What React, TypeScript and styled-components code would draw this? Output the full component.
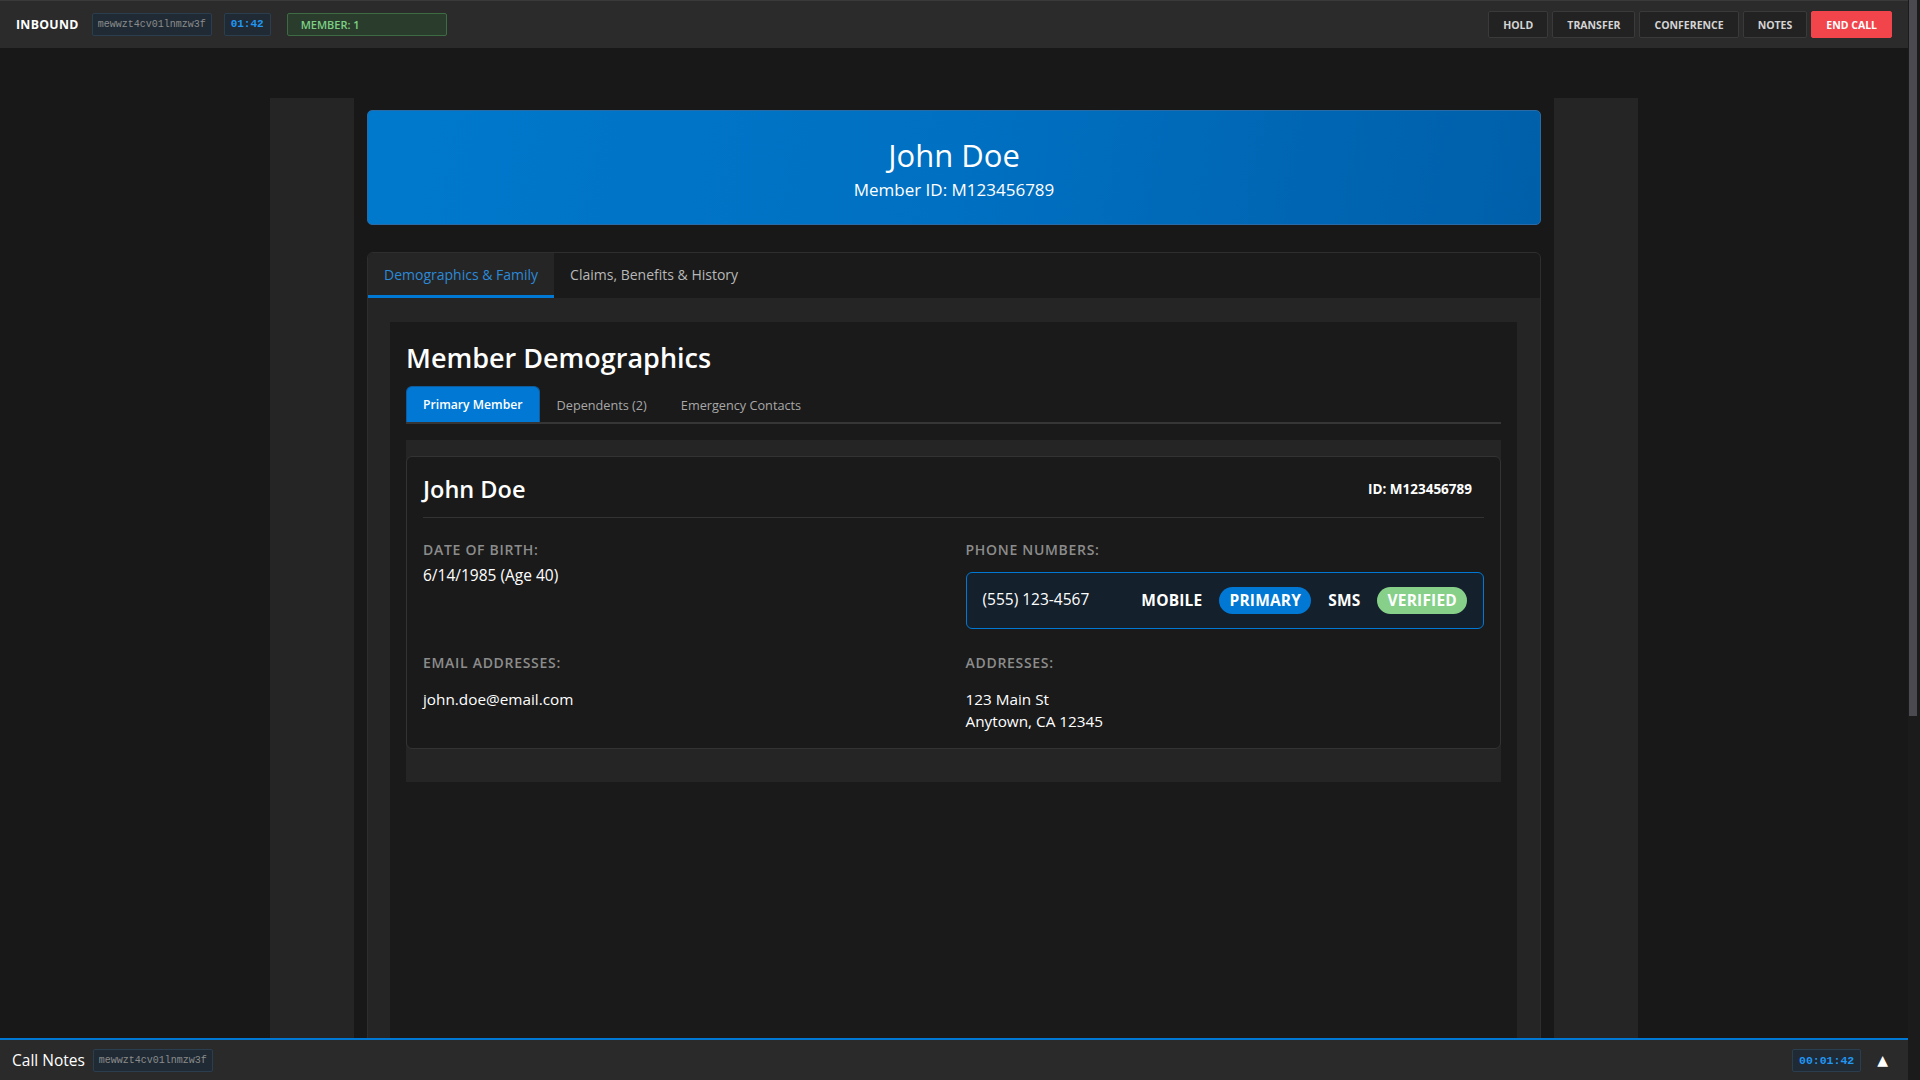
import React from 'react';
import styled, { createGlobalStyle } from 'styled-components';

const GlobalStyle = createGlobalStyle`
  * {
    box-sizing: border-box;
  }
  html,
  body {
    margin: 0;
    padding: 0;
    background: #181818;
    overflow: hidden;
  }
  body {
    font-family: 'Segoe UI', 'Open Sans', 'Noto Sans', sans-serif;
    color: #ffffff;
  }
`;

const sessionId = 'mewwzt4cv01lnmzw3f';
const topActions = ['Hold', 'Transfer', 'Conference', 'Notes'];
const phoneTags = [
  { label: 'Mobile', tone: 'plain' },
  { label: 'Primary', tone: 'blue' },
  { label: 'SMS', tone: 'plain' },
  { label: 'Verified', tone: 'green' },
];

type Tone = 'plain' | 'blue' | 'green';

const tagColors: Record<Tone, string> = {
  plain: 'transparent',
  blue: '#0078d4',
  green: '#86d08a',
};

const App = (): JSX.Element => {
  return (
    <Shell>
      <GlobalStyle />
      <Viewport>
        <TopBar>
          <TopLeft>
            <Direction>INBOUND</Direction>
            <SessionChip>{sessionId}</SessionChip>
            <TimerChip>01:42</TimerChip>
            <MemberChip>MEMBER: 1</MemberChip>
          </TopLeft>
          <TopRight>
            {topActions.map((label) => (
              <ActionButton key={label}>{label}</ActionButton>
            ))}
            <ActionButton danger>End Call</ActionButton>
          </TopRight>
        </TopBar>

        <Main>
          <Layout>
            <SideColumn />
            <Center>
              <MemberHeader>
                <HeaderName>John Doe</HeaderName>
                <HeaderId>Member ID: M123456789</HeaderId>
              </MemberHeader>

              <TabsCard>
                <TabBar>
                  <Tab active>Demographics &amp; Family</Tab>
                  <Tab>Claims, Benefits &amp; History</Tab>
                </TabBar>
                <TabContent>
                  <Panel>
                    <PanelTitle>Member Demographics</PanelTitle>
                    <SubTabBar>
                      <SubTab active>Primary Member</SubTab>
                      <SubTab>Dependents (2)</SubTab>
                      <SubTab>Emergency Contacts</SubTab>
                    </SubTabBar>

                    <CardWell>
                      <MemberCard>
                        <CardHeader>
                          <CardName>John Doe</CardName>
                          <CardId>ID: M123456789</CardId>
                        </CardHeader>
                        <FieldGrid>
                          <Field>
                            <FieldLabel>Date of Birth:</FieldLabel>
                            <FieldValue>6/14/1985 (Age 40)</FieldValue>
                          </Field>
                          <Field>
                            <FieldLabel>Phone Numbers:</FieldLabel>
                            <FieldList offset={14}>
                              <PhoneRow>
                                <PhoneNumber>(555) 123-4567</PhoneNumber>
                                <TagGroup>
                                  {phoneTags.map((tag) => (
                                    <Tag key={tag.label} tone={tag.tone as Tone}>
                                      {tag.label}
                                    </Tag>
                                  ))}
                                </TagGroup>
                              </PhoneRow>
                            </FieldList>
                          </Field>
                          <Field>
                            <FieldLabel>Email Addresses:</FieldLabel>
                            <FieldList offset={17}>
                              <ListLine>john.doe@email.com</ListLine>
                            </FieldList>
                          </Field>
                          <Field>
                            <FieldLabel>Addresses:</FieldLabel>
                            <FieldList offset={17}>
                              <ListLine>123 Main St</ListLine>
                              <ListLine>Anytown, CA 12345</ListLine>
                            </FieldList>
                          </Field>
                        </FieldGrid>
                      </MemberCard>
                    </CardWell>
                  </Panel>
                </TabContent>
              </TabsCard>
            </Center>
            <SideColumn />
          </Layout>
        </Main>

        <BottomBar>
          <BottomLeft>
            <NotesTitle>Call Notes</NotesTitle>
            <SessionChip>{sessionId}</SessionChip>
          </BottomLeft>
          <BottomRight>
            <TimerChip wide>00:01:42</TimerChip>
            <ExpandButton>▲</ExpandButton>
          </BottomRight>
        </BottomBar>
      </Viewport>
      <ScrollTrack>
        <ScrollThumb />
      </ScrollTrack>
    </Shell>
  );
};

const Shell = styled.div`
  height: 100vh;
  display: flex;
  background: #181818;
`;
const Viewport = styled.div`
  flex: 1;
  min-width: 0;
  overflow-y: auto;
  scrollbar-width: none;
  &::-webkit-scrollbar {
    display: none;
  }
`;
const ScrollTrack = styled.div`
  width: 12px;
  flex-shrink: 0;
  padding: 0 3px 0 1px;
  background: #1b1b1b;
`;
const ScrollThumb = styled.div`
  height: 716px;
  background: #4a4a50;
`;

const TopBar = styled.header`
  position: sticky;
  top: 0;
  z-index: 10;
  height: 48px;
  display: flex;
  align-items: center;
  justify-content: space-between;
  padding: 0 16px;
  background: #2b2b2b;
  border-top: 1px solid #3a3a3a;
`;
const TopLeft = styled.div`
  display: flex;
  align-items: center;
  gap: 12px;
`;
const Direction = styled.span`
  font-size: 12.3px;
  font-weight: 700;
  letter-spacing: 0.3px;
  color: #ffffff;
  margin-right: 1px;
`;
const SessionChip = styled.span`
  font-family: 'Liberation Mono', 'DejaVu Sans Mono', monospace;
  font-size: 10px;
  line-height: 13px;
  padding: 4px 5px;
  color: #8c8c8c;
  background: #1f2a34;
  border: 1px solid #2b3e50;
  border-radius: 2px;
`;
const TimerChip = styled.span<{ wide?: boolean }>`
  font-family: 'Liberation Mono', 'DejaVu Sans Mono', monospace;
  font-size: ${({ wide }): string => (wide ? '11.5px' : '11px')};
  font-weight: 700;
  line-height: 13px;
  padding: 4px 6px;
  color: #2196f3;
  background: #1f2a34;
  border: 1px solid #2b3e50;
  border-radius: 2px;
`;
const MemberChip = styled.span`
  width: 160px;
  margin-left: 4px;
  font-size: 11px;
  font-weight: 600;
  line-height: 13px;
  padding: 4px 13px;
  color: #7ccf86;
  background: #2a3d2c;
  border: 1px solid #3d6b42;
  border-radius: 2px;
`;
const TopRight = styled.div`
  display: flex;
  align-items: center;
  gap: 4px;
`;
const ActionButton = styled.button<{ danger?: boolean }>`
  height: 27px;
  padding: 0 14px;
  font-family: inherit;
  font-size: 10.5px;
  font-weight: 700;
  text-transform: uppercase;
  color: ${({ danger }): string => (danger ? '#ffffff' : '#d4d4d4')};
  background: ${({ danger }): string => (danger ? '#f1454b' : '#222222')};
  border: 1px solid ${({ danger }): string => (danger ? '#f1454b' : '#3a3a3a')};
  border-radius: 2px;
  cursor: pointer;
`;

const Main = styled.main`
  padding-top: 50px;
`;
const Layout = styled.div`
  width: 1368px;
  margin: 0 auto;
  display: grid;
  grid-template-columns: 84px 1fr 84px;
  column-gap: 13px;
`;
const SideColumn = styled.aside`
  background: #252525;
`;
const Center = styled.div`
  padding-top: 12px;
  display: flex;
  flex-direction: column;
  gap: 27px;
`;
const MemberHeader = styled.div`
  height: 115px;
  padding-top: 25px;
  text-align: center;
  background: linear-gradient(100deg, #0079cc 0%, #0070c2 50%, #005fa9 100%);
  border: 1px solid #2a6aa5;
  border-radius: 5px;
`;
const HeaderName = styled.h1`
  margin: 0;
  font-size: 31px;
  font-weight: 400;
  line-height: 38px;
  color: #ffffff;
`;
const HeaderId = styled.div`
  margin-top: 5px;
  font-size: 17px;
  line-height: 22px;
  color: #ffffff;
`;

const TabsCard = styled.section`
  background: #1a1a1a;
  border: 1px solid #2e2e2e;
  border-radius: 6px;
  overflow: hidden;
`;
const TabBar = styled.div`
  display: flex;
`;
const Tab = styled.div<{ active?: boolean }>`
  height: 45px;
  padding: 0 16px;
  display: flex;
  align-items: center;
  font-size: 14px;
  font-weight: 500;
  color: ${({ active }): string => (active ? '#2b8ad8' : '#b8b8b8')};
  background: ${({ active }): string => (active ? '#252525' : 'transparent')};
  border-bottom: 3px solid ${({ active }): string => (active ? '#0078d4' : 'transparent')};
`;
const TabContent = styled.div`
  background: #252525;
  padding: 24px 23px 24px 22px;
`;
const Panel = styled.div`
  min-height: 1240px;
  background: #1a1a1a;
  padding: 16px 16px;
`;
const PanelTitle = styled.h2`
  margin: 0;
  padding-top: 2px;
  font-size: 27px;
  font-weight: 600;
  line-height: 36px;
  color: #ffffff;
`;
const SubTabBar = styled.div`
  margin-top: 10px;
  display: flex;
  border-bottom: 2px solid #363636;
`;
const SubTab = styled.div<{ active?: boolean }>`
  height: 36px;
  padding: 0 16px;
  display: flex;
  align-items: center;
  font-size: ${({ active }): string => (active ? '12.2px' : '12.7px')};
  font-weight: ${({ active }): number => (active ? 600 : 500)};
  color: ${({ active }): string => (active ? '#ffffff' : '#a8a8a8')};
  background: ${({ active }): string => (active ? '#0078d4' : 'transparent')};
  border: 1px solid ${({ active }): string => (active ? '#0f5c9c' : 'transparent')};
  border-bottom: none;
  border-radius: 6px 6px 0 0;
`;

const CardWell = styled.div`
  margin-top: 16px;
  padding: 16px 0;
  background: #252525;
`;
const MemberCard = styled.div`
  margin-bottom: 17px;
  padding: 16px;
  background: #1a1a1a;
  border: 1px solid #333333;
  border-radius: 6px;
`;
const CardHeader = styled.div`
  display: flex;
  align-items: center;
  justify-content: space-between;
  padding: 0 12px 12px 0;
  border-bottom: 1px solid #333333;
`;
const CardName = styled.h3`
  margin: 0;
  font-size: 23.5px;
  font-weight: 600;
  line-height: 32px;
  color: #ffffff;
`;
const CardId = styled.span`
  font-size: 13.5px;
  font-weight: 700;
  color: #ffffff;
`;
const FieldGrid = styled.div`
  margin-top: 24px;
  display: grid;
  grid-template-columns: 1fr 1fr;
  column-gap: 24px;
  row-gap: 26px;
`;
const Field = styled.div`
  display: flex;
  flex-direction: column;
`;
const FieldLabel = styled.div`
  font-size: 14px;
  font-weight: 600;
  line-height: 16px;
  letter-spacing: 0.7px;
  text-transform: uppercase;
  color: #8c8c8c;
`;
const FieldValue = styled.div`
  margin-top: 6px;
  font-size: 15.5px;
  line-height: 22px;
  color: #ffffff;
`;
const FieldList = styled.div<{ offset: number }>`
  margin-top: ${({ offset }): string => `${offset}px`};
  display: flex;
  flex-direction: column;
`;
const ListLine = styled.div`
  font-size: 15.3px;
  line-height: 22px;
  color: #ffffff;
`;
const PhoneRow = styled.div`
  display: flex;
  align-items: center;
  justify-content: space-between;
  padding: 14px 16px 14px 16px;
  background: #14202c;
  border: 1px solid #0078d4;
  border-radius: 6px;
`;
const PhoneNumber = styled.span`
  font-size: 15.5px;
  line-height: 22px;
  margin-top: -3px;
  color: #ffffff;
`;
const TagGroup = styled.div`
  display: flex;
  align-items: center;
  gap: 7px;
`;
const Tag = styled.span<{ tone: Tone }>`
  padding: 4px 10px;
  font-size: 15.5px;
  font-weight: 700;
  line-height: 19px;
  letter-spacing: 0.2px;
  text-transform: uppercase;
  color: #ffffff;
  background: ${({ tone }): string => tagColors[tone]};
  border-radius: 14px;
`;

const BottomBar = styled.footer`
  position: sticky;
  bottom: 0;
  z-index: 10;
  height: 42px;
  display: flex;
  align-items: center;
  justify-content: space-between;
  padding: 0 20px 0 12px;
  background: #2a2a2a;
  border-top: 2px solid #0078d4;
`;
const BottomLeft = styled.div`
  display: flex;
  align-items: center;
  gap: 8px;
`;
const NotesTitle = styled.span`
  font-size: 15.5px;
  color: #ffffff;
`;
const BottomRight = styled.div`
  display: flex;
  align-items: center;
  gap: 16px;
`;
const ExpandButton = styled.button`
  padding: 0;
  font-family: 'DejaVu Sans', sans-serif;
  font-size: 14px;
  line-height: 14px;
  color: #ffffff;
  background: transparent;
  border: none;
  cursor: pointer;
`;

export default App;
